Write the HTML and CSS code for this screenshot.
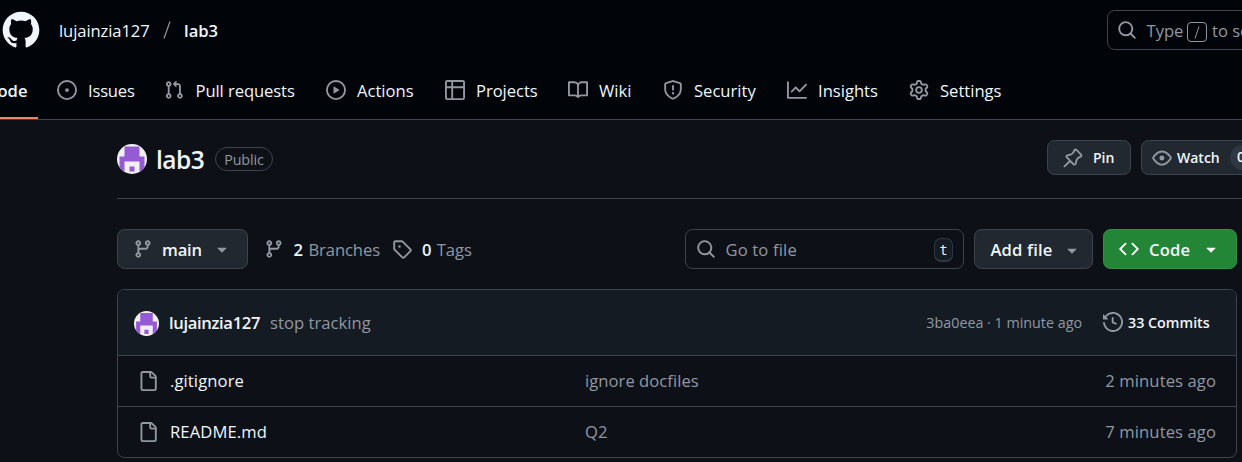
FILE: index.html
```html
<!DOCTYPE html>
<html lang="en">
<head>
<meta charset="utf-8">
<title>lujainzia127/lab3</title>
<link rel="stylesheet" href="styles.css">
</head>
<body>
<svg class="sprite" aria-hidden="true">
  <symbol id="mark" viewBox="0 0 24 24"><path d="M12 1C5.9225 1 1 5.9225 1 12C1 16.8675 4.14875 20.9787 8.52125 22.4362C9.07125 22.5325 9.2775 22.2025 9.2775 21.9137C9.2775 21.6525 9.26375 20.7862 9.26375 19.865C6.5 20.3737 5.785 19.1912 5.565 18.5725C5.44125 18.2562 4.905 17.28 4.4375 17.0187C4.0525 16.8125 3.5025 16.3037 4.42375 16.29C5.29 16.2762 5.90875 17.0875 6.115 17.4175C7.105 19.0812 8.68625 18.6137 9.31875 18.325C9.415 17.61 9.70375 17.1287 10.02 16.8537C7.5725 16.5787 5.015 15.63 5.015 11.4225C5.015 10.2262 5.44125 9.23625 6.1425 8.46625C6.0325 8.19125 5.6475 7.06375 6.2525 5.55125C6.2525 5.55125 7.17375 5.2625 9.2775 6.67875C10.1575 6.43125 11.0925 6.3075 12.0275 6.3075C12.9625 6.3075 13.8975 6.43125 14.7775 6.67875C16.8813 5.24875 17.8025 5.55125 17.8025 5.55125C18.4075 7.06375 18.0225 8.19125 17.9125 8.46625C18.6138 9.23625 19.04 10.2125 19.04 11.4225C19.04 15.6437 16.4688 16.5787 14.0213 16.8537C14.42 17.1975 14.7638 17.8575 14.7638 18.8887C14.7638 20.36 14.75 21.5425 14.75 21.9137C14.75 22.2025 14.9563 22.5462 15.5063 22.4362C19.8513 20.9787 23 16.8537 23 12C23 5.9225 18.0775 1 12 1Z"/></symbol>
  <symbol id="issue" viewBox="0 0 16 16"><path d="M8 9.5a1.5 1.5 0 1 0 0-3 1.5 1.5 0 0 0 0 3Z"/><path d="M8 0a8 8 0 1 1 0 16A8 8 0 0 1 8 0ZM1.5 8a6.5 6.5 0 1 0 13 0 6.5 6.5 0 0 0-13 0Z"/></symbol>
  <symbol id="pr" viewBox="0 0 16 16"><path d="M1.5 3.25a2.25 2.25 0 1 1 3 2.122v5.256a2.251 2.251 0 1 1-1.5 0V5.372A2.25 2.25 0 0 1 1.5 3.25Zm5.677-.177L9.573.677A.25.25 0 0 1 10 .854V2.5h1A2.5 2.5 0 0 1 13.5 5v5.628a2.251 2.251 0 1 1-1.5 0V5a1 1 0 0 0-1-1h-1v1.646a.25.25 0 0 1-.427.177L7.177 3.427a.25.25 0 0 1 0-.354ZM3.75 2.5a.75.75 0 1 0 0 1.5.75.75 0 0 0 0-1.5Zm0 9.5a.75.75 0 1 0 0 1.5.75.75 0 0 0 0-1.5Zm8.25.75a.75.75 0 1 0 1.5 0 .75.75 0 0 0-1.5 0Z"/></symbol>
  <symbol id="play" viewBox="0 0 16 16"><path d="M8 0a8 8 0 1 1 0 16A8 8 0 0 1 8 0ZM1.5 8a6.5 6.5 0 1 0 13 0 6.5 6.5 0 0 0-13 0Zm4.879-2.773 4.264 2.559a.25.25 0 0 1 0 .428l-4.264 2.559A.25.25 0 0 1 6 10.559V5.442a.25.25 0 0 1 .379-.215Z"/></symbol>
  <symbol id="table" viewBox="0 0 16 16"><path d="M0 1.75C0 .784.784 0 1.75 0h12.5C15.216 0 16 .784 16 1.75v12.5A1.75 1.75 0 0 1 14.25 16H1.75A1.75 1.75 0 0 1 0 14.25ZM6.5 6.5v8h7.75a.25.25 0 0 0 .25-.25V6.5Zm8-1.5V1.75a.25.25 0 0 0-.25-.25H6.5V5Zm-13 1.5v7.75c0 .138.112.25.25.25H5v-8ZM5 5V1.5H1.75a.25.25 0 0 0-.25.25V5Z"/></symbol>
  <symbol id="book" viewBox="0 0 16 16"><path d="M0 1.75A.75.75 0 0 1 .75 1h4.253c1.227 0 2.317.59 3 1.501A3.743 3.743 0 0 1 11.006 1h4.245a.75.75 0 0 1 .75.75v10.5a.75.75 0 0 1-.75.75h-4.507a2.25 2.25 0 0 0-1.591.659l-.622.621a.75.75 0 0 1-1.06 0l-.622-.621A2.25 2.25 0 0 0 5.258 13H.75a.75.75 0 0 1-.75-.75Zm7.251 10.324.004-5.073-.002-2.253A2.25 2.25 0 0 0 5.003 2.5H1.5v9h3.757a3.75 3.75 0 0 1 1.994.574ZM8.755 4.75l-.004 7.322a3.752 3.752 0 0 1 1.992-.572H14.5v-9h-3.495a2.25 2.25 0 0 0-2.25 2.25Z"/></symbol>
  <symbol id="shield" viewBox="0 0 16 16"><path d="M7.467.133a1.748 1.748 0 0 1 1.066 0l5.25 1.68A1.75 1.75 0 0 1 15 3.48V7c0 1.566-.32 3.182-1.303 4.682-.983 1.498-2.585 2.813-5.032 3.855a1.697 1.697 0 0 1-1.33 0c-2.447-1.042-4.049-2.357-5.032-3.855C1.32 10.182 1 8.566 1 7V3.48a1.75 1.75 0 0 1 1.217-1.667Zm.61 1.429a.25.25 0 0 0-.153 0l-5.25 1.68a.25.25 0 0 0-.174.238V7c0 1.358.275 2.666 1.057 3.86.784 1.194 2.121 2.34 4.366 3.297a.196.196 0 0 0 .154 0c2.245-.956 3.582-2.104 4.366-3.298C13.225 9.666 13.5 8.36 13.5 7V3.48a.251.251 0 0 0-.174-.237l-5.25-1.68ZM8.75 4.75v3a.75.75 0 0 1-1.5 0v-3a.75.75 0 0 1 1.5 0ZM9 10.5a1 1 0 1 1-2 0 1 1 0 0 1 2 0Z"/></symbol>
  <symbol id="graph" viewBox="0 0 16 16"><path d="M1.5 1.75V13.5h13.75a.75.75 0 0 1 0 1.5H.75a.75.75 0 0 1-.75-.75V1.75a.75.75 0 0 1 1.5 0Zm14.28 2.53-5.25 5.25a.75.75 0 0 1-1.06 0L7 7.06 4.28 9.78a.751.751 0 0 1-1.042-.018.751.751 0 0 1-.018-1.042l3.25-3.25a.75.75 0 0 1 1.06 0L10 7.94l4.72-4.72a.751.751 0 0 1 1.042.018.751.751 0 0 1 .018 1.042Z"/></symbol>
  <symbol id="gear" viewBox="0 0 16 16"><path d="M8 0a8.2 8.2 0 0 1 .701.031C9.444.095 9.99.645 10.16 1.29l.288 1.107c.018.066.079.158.212.224.231.114.454.243.668.386.123.082.233.09.299.071l1.103-.303c.644-.176 1.392.021 1.82.63.27.385.506.792.704 1.218.315.675.111 1.422-.364 1.891l-.814.806c-.049.048-.098.147-.088.294.016.257.016.515 0 .772-.01.147.038.246.088.294l.814.806c.475.469.679 1.216.364 1.891a7.977 7.977 0 0 1-.704 1.217c-.428.61-1.176.807-1.82.63l-1.102-.302c-.067-.019-.177-.011-.3.071a5.909 5.909 0 0 1-.668.386c-.133.066-.194.158-.211.224l-.29 1.106c-.168.646-.715 1.196-1.458 1.26a8.006 8.006 0 0 1-1.402 0c-.743-.064-1.289-.614-1.458-1.26l-.289-1.106c-.018-.066-.079-.158-.212-.224a5.738 5.738 0 0 1-.668-.386c-.123-.082-.233-.09-.299-.071l-1.103.303c-.644.176-1.392-.021-1.82-.63a8.12 8.12 0 0 1-.704-1.218c-.315-.675-.111-1.422.363-1.891l.815-.806c.05-.048.098-.147.088-.294a6.214 6.214 0 0 1 0-.772c.01-.147-.038-.246-.088-.294l-.815-.806C.635 6.045.431 5.298.746 4.623a7.92 7.92 0 0 1 .704-1.217c.428-.61 1.176-.807 1.82-.63l1.102.302c.067.019.177.011.3-.071.214-.143.437-.272.668-.386.133-.066.194-.158.211-.224l.29-1.106C6.009.645 6.556.095 7.299.03 7.53.01 7.764 0 8 0Zm-.571 1.525c-.036.003-.108.036-.137.146l-.289 1.105c-.147.561-.549.967-.998 1.189-.173.086-.34.183-.5.29-.417.278-.97.423-1.529.27l-1.103-.303c-.109-.03-.175.016-.195.045-.22.312-.412.644-.573.99-.014.031-.021.11.059.19l.815.806c.411.406.562.957.53 1.456a4.709 4.709 0 0 0 0 .582c.032.499-.119 1.05-.53 1.456l-.815.806c-.081.08-.073.159-.059.19.162.346.353.677.573.989.02.03.085.076.195.046l1.102-.303c.56-.153 1.113-.008 1.53.27.161.107.328.204.501.29.447.222.85.629.997 1.189l.289 1.105c.029.109.101.143.137.146a6.6 6.6 0 0 0 1.142 0c.036-.003.108-.036.137-.146l.289-1.105c.147-.561.549-.967.998-1.189.173-.086.34-.183.5-.29.417-.278.97-.423 1.529-.27l1.103.303c.109.029.175-.016.195-.045.22-.313.411-.644.573-.99.014-.031.021-.11-.059-.19l-.815-.806c-.411-.406-.562-.957-.53-1.456a4.709 4.709 0 0 0 0-.582c-.032-.499.119-1.05.53-1.456l.815-.806c.081-.08.073-.159.059-.19a6.464 6.464 0 0 0-.573-.989c-.02-.03-.085-.076-.195-.046l-1.102.303c-.56.153-1.113.008-1.53-.27a4.44 4.44 0 0 0-.501-.29c-.447-.222-.85-.629-.997-1.189l-.289-1.105c-.029-.11-.101-.143-.137-.146a6.6 6.6 0 0 0-1.142 0ZM11 8a3 3 0 1 1-6 0 3 3 0 0 1 6 0ZM9.5 8a1.5 1.5 0 1 0-3.001.001A1.5 1.5 0 0 0 9.5 8Z"/></symbol>
  <symbol id="search" viewBox="0 0 16 16"><path d="M10.68 11.74a6 6 0 0 1-7.922-8.982 6 6 0 0 1 8.982 7.922l3.04 3.04a.749.749 0 0 1-.326 1.275.749.749 0 0 1-.734-.215ZM11.5 7a4.499 4.499 0 1 0-8.997 0A4.499 4.499 0 0 0 11.5 7Z"/></symbol>
  <symbol id="pin" viewBox="0 0 16 16"><path d="m11.294.984 3.722 3.722a1.75 1.75 0 0 1-.504 2.826l-1.327.613a3.089 3.089 0 0 0-1.707 2.084l-.584 2.454c-.317 1.332-1.972 1.8-2.94.832L5.75 11.311 1.78 15.28a.749.749 0 1 1-1.06-1.06l3.969-3.97-2.204-2.204c-.968-.968-.5-2.623.832-2.94l2.454-.584a3.08 3.08 0 0 0 2.084-1.707l.613-1.327a1.75 1.75 0 0 1 2.826-.504ZM6.283 9.723l2.732 2.731a.25.25 0 0 0 .42-.119l.584-2.454a4.586 4.586 0 0 1 2.537-3.098l1.328-.613a.25.25 0 0 0 .072-.404l-3.722-3.722a.25.25 0 0 0-.404.072l-.613 1.328a4.584 4.584 0 0 1-3.098 2.537l-2.454.584a.25.25 0 0 0-.119.42l2.731 2.732Z"/></symbol>
  <symbol id="eye" viewBox="0 0 16 16"><path d="M8 2c1.981 0 3.671.992 4.933 2.078 1.27 1.091 2.187 2.345 2.637 3.023a1.62 1.62 0 0 1 0 1.798c-.45.678-1.367 1.932-2.637 3.023C11.67 13.008 9.981 14 8 14c-1.981 0-3.671-.992-4.933-2.078C1.797 10.83.88 9.576.43 8.898a1.62 1.62 0 0 1 0-1.798c.45-.677 1.367-1.931 2.637-3.022C4.33 2.992 6.019 2 8 2ZM1.679 7.932a.12.12 0 0 0 0 .136c.411.622 1.241 1.75 2.366 2.717C5.176 11.758 6.527 12.5 8 12.5c1.473 0 2.825-.742 3.955-1.715 1.124-.967 1.954-2.096 2.366-2.717a.12.12 0 0 0 0-.136c-.412-.621-1.242-1.75-2.366-2.717C10.824 4.242 9.473 3.5 8 3.5c-1.473 0-2.825.742-3.955 1.715-1.124.967-1.954 2.096-2.366 2.717ZM8 10a2 2 0 1 1-.001-3.999A2 2 0 0 1 8 10Z"/></symbol>
  <symbol id="branch" viewBox="0 0 16 16"><path d="M9.5 3.25a2.25 2.25 0 1 1 3 2.122V6A2.5 2.5 0 0 1 10 8.5H6a1 1 0 0 0-1 1v1.128a2.251 2.251 0 1 1-1.5 0V5.372a2.25 2.25 0 1 1 1.5 0v1.836A2.493 2.493 0 0 1 6 7h4a1 1 0 0 0 1-1v-.628A2.25 2.25 0 0 1 9.5 3.25Zm-6 0a.75.75 0 1 0 1.5 0 .75.75 0 0 0-1.5 0Zm8.25-.75a.75.75 0 1 0 0 1.5.75.75 0 0 0 0-1.5ZM4.25 12a.75.75 0 1 0 0 1.5.75.75 0 0 0 0-1.5Z"/></symbol>
  <symbol id="tag" viewBox="0 0 16 16"><path d="M1 7.775V2.75C1 1.784 1.784 1 2.75 1h5.025c.464 0 .91.184 1.238.513l6.25 6.25a1.75 1.75 0 0 1 0 2.474l-5.026 5.026a1.75 1.75 0 0 1-2.474 0l-6.25-6.25A1.752 1.752 0 0 1 1 7.775Zm1.5 0c0 .066.026.13.073.177l6.25 6.25a.25.25 0 0 0 .354 0l5.025-5.025a.25.25 0 0 0 0-.354l-6.25-6.25a.25.25 0 0 0-.177-.073H2.75a.25.25 0 0 0-.25.25ZM6 5a1 1 0 1 1 0 2 1 1 0 0 1 0-2Z"/></symbol>
  <symbol id="code" viewBox="0 0 16 16"><path d="m11.28 3.22 4.25 4.25a.75.75 0 0 1 0 1.06l-4.25 4.25a.749.749 0 0 1-1.275-.326.749.749 0 0 1 .215-.734L13.94 8l-3.72-3.72a.749.749 0 0 1 .326-1.275.749.749 0 0 1 .734.215Zm-6.56 0a.751.751 0 0 1 1.042.018.751.751 0 0 1 .018 1.042L2.06 8l3.72 3.72a.749.749 0 0 1-.326 1.275.749.749 0 0 1-.734-.215L.47 8.53a.75.75 0 0 1 0-1.06Z"/></symbol>
  <symbol id="caret" viewBox="0 0 16 16"><path d="m4.427 7.427 3.396 3.396a.25.25 0 0 0 .354 0l3.396-3.396A.25.25 0 0 0 11.396 7H4.604a.25.25 0 0 0-.177.427Z"/></symbol>
  <symbol id="history" viewBox="0 0 16 16"><path d="m.427 1.927 1.215 1.215a8.002 8.002 0 1 1-1.6 5.685.75.75 0 1 1 1.493-.154 6.5 6.5 0 1 0 1.18-4.458l1.358 1.358A.25.25 0 0 1 3.896 6H.25A.25.25 0 0 1 0 5.75V2.104a.25.25 0 0 1 .427-.177ZM7.75 4a.75.75 0 0 1 .75.75v2.992l2.028.812a.75.75 0 0 1-.557 1.392l-2.5-1A.751.751 0 0 1 7 8.25v-3.5A.75.75 0 0 1 7.75 4Z"/></symbol>
  <symbol id="file" viewBox="0 0 16 16"><path d="M2 1.75C2 .784 2.784 0 3.75 0h6.586c.464 0 .909.184 1.237.513l2.914 2.914c.329.328.513.773.513 1.237v9.586A1.75 1.75 0 0 1 13.25 16h-9.5A1.75 1.75 0 0 1 2 14.25Zm1.75-.25a.25.25 0 0 0-.25.25v12.5c0 .138.112.25.25.25h9.5a.25.25 0 0 0 .25-.25V6h-2.75A1.75 1.75 0 0 1 9 4.25V1.5Zm6.75.062V4.25c0 .138.112.25.25.25h2.688l-.011-.013-2.914-2.914-.013-.011Z"/></symbol>
  <symbol id="avatar" viewBox="0 0 6 6"><path fill="#f0f0f0" d="M0 0h6v6H0z"/><path fill="#955bd4" d="M1.5.5h3v2h1v3h-1v-2h-3v2h-1v-3h1zM2.5 4.5h1v1h-1z"/></symbol>
</svg>

<header class="top">
  <div class="crumbs">
    <svg class="logo"><use href="#mark"/></svg>
    <a class="owner">lujainzia127</a>
    <svg class="slash" viewBox="0 0 8 18"><path d="M7 .5 1 17.5"/></svg>
    <a class="repo">lab3</a>
    <div class="search">
      <svg class="icon"><use href="#search"/></svg>
      <span class="search-type">Type</span><kbd class="key"><svg viewBox="0 0 6 13"><path d="M5 .5 1 12.5"/></svg></kbd><span class="search-rest">to search</span>
    </div>
  </div>
  <nav class="tabs">
    <a class="tab tab-code"><span>Code</span></a>
    <a class="tab tab-issues"><svg class="icon"><use href="#issue"/></svg><span>Issues</span></a>
    <a class="tab tab-pulls"><svg class="icon"><use href="#pr"/></svg><span>Pull requests</span></a>
    <a class="tab tab-actions"><svg class="icon"><use href="#play"/></svg><span>Actions</span></a>
    <a class="tab tab-projects"><svg class="icon"><use href="#table"/></svg><span>Projects</span></a>
    <a class="tab tab-wiki"><svg class="icon"><use href="#book"/></svg><span>Wiki</span></a>
    <a class="tab tab-security"><svg class="icon"><use href="#shield"/></svg><span>Security</span></a>
    <a class="tab tab-insights"><svg class="icon"><use href="#graph"/></svg><span>Insights</span></a>
    <a class="tab tab-settings"><svg class="icon"><use href="#gear"/></svg><span>Settings</span></a>
  </nav>
</header>

<main class="page">
  <section class="title">
    <svg class="avatar"><use href="#avatar"/></svg>
    <h1>lab3</h1>
    <span class="badge">Public</span>
    <button class="btn btn-pin"><svg class="icon"><use href="#pin"/></svg><span>Pin</span></button>
    <button class="btn btn-watch"><svg class="icon"><use href="#eye"/></svg><span class="watch">Watch</span><span class="count">0</span></button>
  </section>

  <section class="toolbar">
    <button class="btn btn-branch"><svg class="icon"><use href="#branch"/></svg><span>main</span><svg class="icon"><use href="#caret"/></svg></button>
    <a class="stat stat-branches"><svg class="icon"><use href="#branch"/></svg><b>2</b><span>Branches</span></a>
    <a class="stat stat-tags"><svg class="icon"><use href="#tag"/></svg><b>0</b><span>Tags</span></a>
    <div class="finder"><svg class="icon"><use href="#search"/></svg><span>Go to file</span><kbd>t</kbd></div>
    <button class="btn btn-add"><span>Add file</span><svg class="icon"><use href="#caret"/></svg></button>
    <button class="btn btn-code"><svg class="icon"><use href="#code"/></svg><span>Code</span><svg class="icon"><use href="#caret"/></svg></button>
  </section>

  <section class="files">
    <div class="commit">
      <svg class="avatar"><use href="#avatar"/></svg>
      <b class="author">lujainzia127</b>
      <span class="message">stop tracking</span>
      <span class="sha">3ba0eea · 1 minute ago</span>
      <svg class="icon"><use href="#history"/></svg>
      <b class="commits">33 Commits</b>
    </div>
    <div class="row">
      <svg class="icon"><use href="#file"/></svg>
      <span class="name">.gitignore</span>
      <span class="note">ignore docfiles</span>
      <span class="age">2 minutes ago</span>
    </div>
    <div class="row">
      <svg class="icon"><use href="#file"/></svg>
      <span class="name">README.md</span>
      <span class="note">Q2</span>
      <span class="age">7 minutes ago</span>
    </div>
  </section>
</main>
</body>
</html>
```
FILE: styles.css
```css
* { box-sizing: border-box; }
html, body { margin: 0; height: 462px; overflow: hidden; }
body {
  width: 1242px;
  background: #0d1117;
  color: #f0f6fc;
  font: 16.6px/24px "Open Sans", "Noto Sans", sans-serif;
  white-space: nowrap;
}
.sprite { display: none; }
.icon { width: 20px; height: 20px; flex: none; fill: #9198a1; }
b { font-weight: 600; }

/* Global header */
.top { height: 120px; background: #010409; border-bottom: 1px solid #3d444d; overflow: hidden; }
.crumbs { display: flex; align-items: center; height: 60px; padding-left: 1px; }
.crumbs > * { flex: none; }
.logo { width: 40px; height: 40px; fill: #f0f6fc; }
.owner, .repo { padding-top: 1px; }
.search span { padding-top: 2px; }
.owner { width: 91px; margin-left: 18px; letter-spacing: -0.1px; }
.slash { width: 8px; height: 18px; margin: 0 13px 0 13px; fill: none; stroke: #9198a1; stroke-width: 1.2; }
.repo { font-weight: 600; width: 40px; }
.search {
  display: flex; align-items: center;
  width: 400px; height: 40px; margin-left: 883px; padding-left: 9px;
  border: 1px solid #3d444d; border-radius: 7.5px; color: #9198a1;
}
.search .search-type { width: 36.5px; margin-left: 9.5px; }
.key {
  display: flex; align-items: center; justify-content: center;
  width: 20px; height: 20px; margin: 4px 5px 0 4px;
  border: 1px solid #9198a1; border-radius: 4px;
}
.key svg { width: 6px; height: 13px; fill: none; stroke: #9198a1; }

/* Repository tabs */
.tabs { display: flex; height: 59px; gap: 20px; }
.tab { display: flex; align-items: center; gap: 11px; height: 59px; flex: none; }
.tab span { padding-top: 2px; }
.tab-code { width: 37.5px; margin-right: -0.5px; justify-content: flex-end; padding: 2px 10px 0 0; font-weight: 600; border-bottom: 2px solid #f78166; }
.tab-issues { width: 87px; letter-spacing: -0.2px; }
.tab-pulls { width: 142px; }
.tab-pulls span { margin-left: 0.5px; letter-spacing: -0.08px; }
.tab-actions { width: 99px; }
.tab-projects { width: 103px; letter-spacing: -0.05px; }
.tab-wiki { width: 75px; }
.tab-security { width: 104px; }
.tab-insights { width: 102px; }
.tab-settings { width: 104px; }

/* Repository title */
.page { padding-left: 117px; }
.title { display: flex; align-items: center; height: 79px; padding-bottom: 2px; border-bottom: 1px solid #3d444d; }
.avatar { border-radius: 50%; flex: none; }
.title .avatar { width: 30px; height: 30px; margin-top: 2px; }
h1 { font-size: 24.5px; font-weight: 600; width: 49px; flex: none; margin: 3px 0 0 9px; letter-spacing: -0.5px; }
.badge {
  width: 58px; height: 24px; margin: 2px 774px 0 10px; flex: none;
  border: 1px solid #3d444d; border-radius: 12px;
  color: #9198a1; font-size: 14.3px; font-weight: 500; line-height: 24px; text-align: center; letter-spacing: -0.1px;
}
.btn {
  display: flex; align-items: center; flex: none; padding: 0;
  height: 40px; color: #f0f6fc; background: #212830;
  border: 1px solid #3d444d; border-radius: 7.5px;
  font: 600 16.6px/24px "Open Sans", "Noto Sans", sans-serif; white-space: nowrap;
  text-align: left;
}
.btn-pin, .btn-watch { height: 35px; margin-bottom: 1px; font-size: 14px; }
.btn-pin { width: 84px; padding-left: 15px; gap: 10px; }
.btn-watch { width: 130px; margin-left: 10px; padding-left: 10px; gap: 5px; }
.watch { width: 43px; }
.count { width: 32px; height: 25px; margin-left: 5px; padding-left: 7px; border-radius: 13px; background: #2f3742; }

/* Branch toolbar */
.toolbar { display: flex; align-items: center; height: 40px; margin-top: 30px; }
.toolbar span, .toolbar b { padding-top: 2px; }
.btn-branch { width: 131px; padding-left: 15px; }
.btn-branch span { width: 40px; margin: 0 10px 0 9px; letter-spacing: -0.2px; }
.stat { display: flex; align-items: center; color: #9198a1; font-weight: 500; flex: none; }
.stat .icon { margin-bottom: 1px; }
.stat b { color: #f0f6fc; width: 10px; margin: 0 5px 0 9.5px; }
.stat-branches { width: 128px; margin-left: 16px; }
.stat-branches span { letter-spacing: -0.1px; }
.stat-tags { width: 80px; margin-right: 213px; }
.stat-tags b { margin-left: 10px; }
.finder {
  display: flex; align-items: center; flex: none;
  width: 279px; height: 40px; padding-left: 10px;
  border: 1px solid #3d444d; border-radius: 7.5px; color: #9198a1;
}
.finder span { width: 198px; margin-left: 9.5px; letter-spacing: 0.15px; }
.finder kbd {
  width: 19px; height: 24px; margin: 2px 0 0 10.5px;
  background: #151b23; border: 1px solid #2f3742; border-bottom-width: 2px; border-radius: 7px;
  color: #f0f6fc; font: 13.5px/23px "DejaVu Sans Mono", monospace; text-align: center;
}
.btn-add { width: 119px; margin-left: 10px; padding-left: 15.5px; }
.btn-add span { width: 71.5px; letter-spacing: 0.15px; }
.btn-add .icon, .btn-branch .icon:last-child { fill: #9198a1; }
.btn-add .icon { margin-top: 1px; }
.btn-code { width: 134px; margin-left: 10px; padding-left: 15px; background: #238636; border-color: #388e48; }
.btn-code .icon { fill: #fff; }
.btn-code span { width: 52px; margin-left: 10px; letter-spacing: 0.2px; }

/* File list */
.files { width: 1120px; height: 169px; margin-top: 20px; border: 1px solid #3d444d; border-radius: 7.5px; overflow: hidden; }
.commit { display: flex; align-items: center; height: 65px; padding-left: 16px; background: #151b23; color: #9198a1; }
.commit > * { flex: none; }
.commit .avatar { width: 25px; height: 25px; margin-top: 2px; }
.author { color: #f0f6fc; width: 92px; margin-left: 10px; letter-spacing: -0.35px; }
.message { width: 637px; margin-left: 9px; letter-spacing: 0.05px; }
.sha { width: 166px; margin: 0 1px 0 9px; font-size: 14.3px; text-align: right; }
.commit .icon { margin: 0 5px 2px 20px; }
.commits { color: #f0f6fc; font-size: 14.3px; }
.row { display: flex; align-items: center; height: 51px; padding: 0 20px; border-top: 1px solid #3d444d; color: #9198a1; }
.name { color: #f0f6fc; width: 415px; margin-left: 12px; letter-spacing: 0.1px; }
.note { letter-spacing: 0.05px; }
.age { margin-left: auto; letter-spacing: 0.1px; }
```
